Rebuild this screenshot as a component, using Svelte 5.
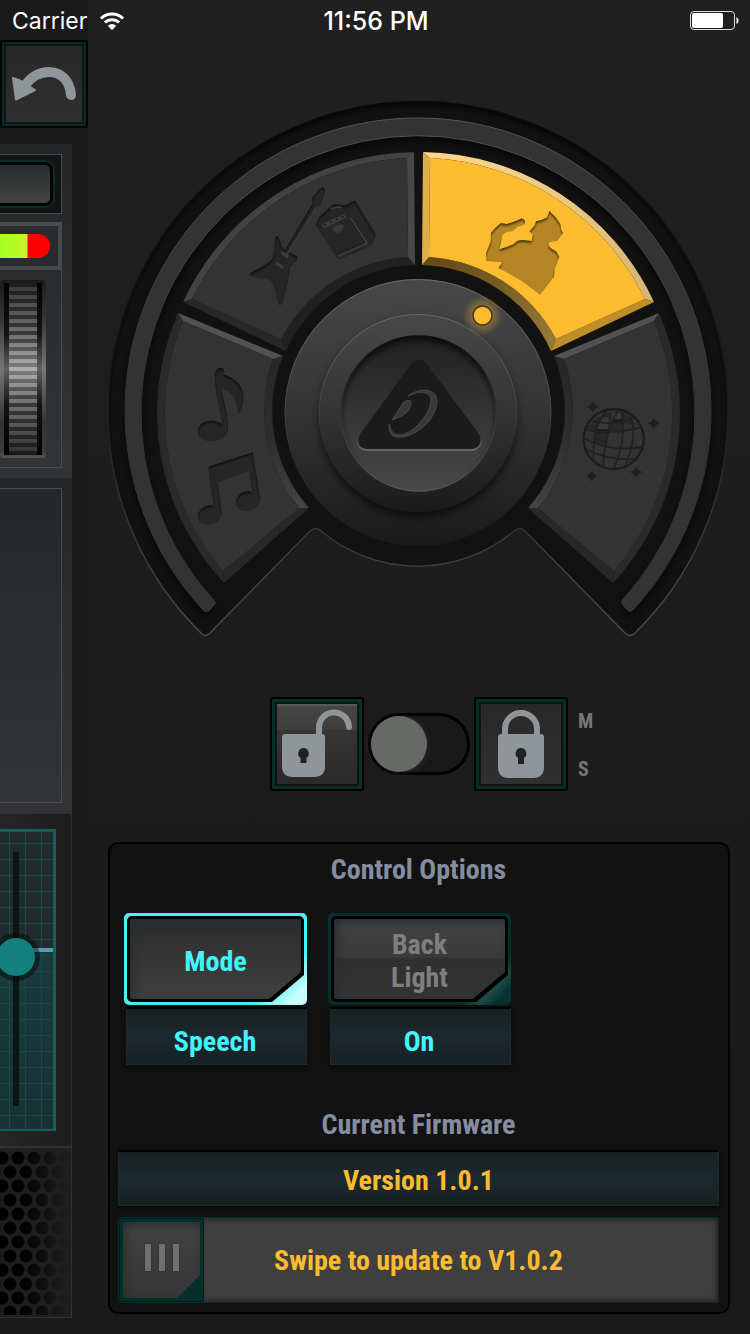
<script>
  const cx = 418.5;
  const mirror = ([x, y]) => [2 * cx - x, y];

  // Corner order: outer start, outer end, inner end, inner start (clockwise).
  const music = {
    ro: 249,
    rof: 243,
    out: [[224, 583], [178, 313], [283, 356], [309, 508]],
    face: [[223, 571], [183, 321], [273, 359], [299, 508]]
  };
  const guitar = {
    ro: 259,
    rof: 252,
    out: [[183, 302], [414, 152], [415, 265], [286, 351]],
    face: [[192, 299], [407, 158], [408, 257], [281, 339]]
  };
  const flip = ({ ro, rof, out, face }) => {
    const f = (p) => [mirror(p[1]), mirror(p[0]), mirror(p[3]), mirror(p[2])];
    return { ro, rof, out: f(out), face: f(face) };
  };

  const ri = 146, rif = 154;
  const p = ([x, y]) => `${x},${y}`;
  function build(name, s, colors) {
    const [A, B, C, D] = s.out;
    const [a, b, c, d] = s.face;
    const { ro, rof } = s;
    return {
      name,
      colors,
      face: `M${p(a)}A${rof},${rof} 0 0 1 ${p(b)}L${p(c)}A${rif},${rif} 0 0 0 ${p(d)}Z`,
      outer: `M${p(A)}A${ro},${ro} 0 0 1 ${p(B)}L${p(b)}A${rof},${rof} 0 0 0 ${p(a)}Z`,
      end: `M${p(B)}L${p(C)}L${p(c)}L${p(b)}Z`,
      inner: `M${p(C)}A${ri},${ri} 0 0 0 ${p(D)}L${p(d)}A${rif},${rif} 0 0 1 ${p(c)}Z`,
      start: `M${p(D)}L${p(A)}L${p(a)}L${p(d)}Z`
    };
  }

  const segments = [
    build('Music', music, { face: '#333', outer: '#2a2a2a', end: '#525252', inner: 'url(#innerSide)', start: '#282828' }),
    build('Guitar', guitar, { face: '#333', outer: '#434343', end: '#484848', inner: '#212121', start: '#272727' }),
    build('Speech', flip(guitar), { face: '#fdbb30', outer: 'url(#goldOuter)', end: '#c08e29', inner: 'url(#goldInner)', start: '#dfae48' }),
    build('Party', flip(music), { face: '#333', outer: '#2a2a2a', end: '#282828', inner: 'url(#innerSide)', start: '#525252' })
  ];

  const stars = [[549, 170], [732, 219], [546, 378], [679, 366]];
  const holes = [];
  for (let r = 0; r < 12; r++)
    for (let c = 0; c < 5; c++) holes.push([(r % 2 ? -6 : 2) + c * 16, 7 + r * 14]);

  const base = 'M201,633A310,310 0 1 1 635,633Q630,638 625,633L525,531Q520,526 514,531A150,150 0 0 1 321,531Q316,526 310,531L210,633Q205,638 201,633Z';

  let locked = $state(false);
  let level = $state(60);
</script>

<div class="app">
  <header class="status">
    <span class="carrier">Carrier
      <svg width="26" height="20" viewBox="0 0 26 20" aria-hidden="true">
        <path d="M2 7.500A15.500 15.500 0 0 1 24 7.500M6 11.500A10 10 0 0 1 20 11.500" fill="none" stroke="#fff" stroke-width="3" />
        <path d="M13 19L8.800 14.800A6 6 0 0 1 17.200 14.800Z" fill="#fff" />
      </svg>
    </span>
    <span class="clock">11:56 PM</span>
    <svg class="battery" width="50" height="20" viewBox="0 0 50 20" aria-hidden="true">
      <rect x=".5" y=".5" width="44" height="18" rx="3.500" fill="none" stroke="#ddd" />
      <rect x="2" y="2" width="31" height="15" rx="2" fill="#fff" />
      <path d="M46.500 6a4 4 0 0 1 0 7z" fill="#fff" />
    </svg>
  </header>

  <aside>
    <button class="undo" aria-label="Undo">
      <svg viewBox="0 0 76 76" aria-hidden="true">
        <path d="M19 40C30 21 62 19 65 49" fill="none" stroke="#8f9699" stroke-width="10" stroke-linecap="round" />
        <path d="M7 32L15 35L29 44L10 53.500Z" fill="#8f9699" stroke="#8f9699" stroke-width="2" stroke-linejoin="round" />
      </svg>
    </button>

    <section class="channel">
      <div class="display"><div class="lcd"></div></div>
      <div class="meter"><div class="bar"></div></div>
      <div class="wheel-box">
        <div class="wheel"><div class="rim"></div><div class="ridges"></div><div class="rim"></div></div>
      </div>
    </section>
    <section class="blank"><div></div></section>
    <section class="fader">
      <div class="grid">
        <input type="range" aria-label="Level" min="0" max="100" bind:value={level} />
      </div>
    </section>
    <section class="grille">
      <svg width="71" height="164" viewBox="0 0 71 164" aria-hidden="true">
        <defs>
          <linearGradient id="fade" gradientUnits="userSpaceOnUse" x1="20" y1="0" x2="68" y2="0">
            <stop offset="0" stop-color="#000" />
            <stop offset="1" stop-color="#000" stop-opacity="0" />
          </linearGradient>
        </defs>
        {#each holes as [x, y]}
          <circle cx={x} cy={y} r="6.500" fill="url(#fade)" />
        {/each}
      </svg>
    </section>
  </aside>

  <main>
    <svg class="dial" viewBox="88 40 662 620">
      <defs>
        <linearGradient id="innerSide" x1="0" y1="0" x2="0" y2="1">
          <stop offset="0" stop-color="#262626" />
          <stop offset=".55" stop-color="#2e2e2e" />
          <stop offset="1" stop-color="#444" />
        </linearGradient>
        <linearGradient id="goldOuter" x1="0" y1="0" x2="1" y2="1">
          <stop offset="0" stop-color="#ffd78a" />
          <stop offset="1" stop-color="#d6b473" />
        </linearGradient>
        <linearGradient id="goldInner" x1="0" y1="0" x2="1" y2="1">
          <stop offset="0" stop-color="#5f4812" />
          <stop offset="1" stop-color="#9c7c3b" />
        </linearGradient>
        <linearGradient id="rimLine" x1="0" y1="0" x2="0" y2="1">
          <stop offset="0" stop-color="#0a0a0a" />
          <stop offset=".5" stop-color="#171717" />
          <stop offset="1" stop-color="#4a4a4a" />
        </linearGradient>
        <linearGradient id="ringLine" x1="0" y1="0" x2="0" y2="1">
          <stop offset="0" stop-color="#565656" />
          <stop offset=".6" stop-color="#333" />
        </linearGradient>
        <linearGradient id="knob" x1="0" y1="0" x2="0" y2="1">
          <stop offset="0" stop-color="#484848" />
          <stop offset=".45" stop-color="#363636" />
          <stop offset="1" stop-color="#1a1a1a" />
        </linearGradient>
        <linearGradient id="knobLine" x1="0" y1="0" x2="0" y2="1">
          <stop offset="0" stop-color="#6a6a6a" />
          <stop offset=".7" stop-color="#6a6a6a" stop-opacity="0" />
        </linearGradient>
        <linearGradient id="dish" x1="0" y1="0" x2="0" y2="1">
          <stop offset="0" stop-color="#202020" />
          <stop offset="1" stop-color="#494949" />
        </linearGradient>
        <linearGradient id="dishLine" x1="0" y1="0" x2="0" y2="1">
          <stop offset="0" stop-color="#0c0c0c" />
          <stop offset="1" stop-color="#555" />
        </linearGradient>
        <linearGradient id="triLine" x1="0" y1="0" x2="0" y2="1">
          <stop offset=".85" stop-color="#777" stop-opacity="0" />
          <stop offset="1" stop-color="#666" />
        </linearGradient>
        <radialGradient id="glow">
          <stop offset=".4" stop-color="#fdbb30" stop-opacity=".4" />
          <stop offset="1" stop-color="#fdbb30" stop-opacity="0" />
        </radialGradient>
        <filter id="drop" color-interpolation-filters="sRGB" x="-20%" y="-20%" width="140%" height="150%">
          <feDropShadow dx="0" dy="5" stdDeviation="4" flood-color="#000" flood-opacity=".6" />
        </filter>
        <filter id="carve" color-interpolation-filters="sRGB" x="-10%" y="-10%" width="120%" height="120%">
          <feOffset in="SourceAlpha" dy="6" result="o" />
          <feGaussianBlur in="o" stdDeviation="2.500" result="b" />
          <feComposite in="SourceAlpha" in2="b" operator="out" result="edge" />
          <feComponentTransfer in="edge" result="soft"><feFuncA type="linear" slope=".6" /></feComponentTransfer>
          <feMerge><feMergeNode in="SourceGraphic" /><feMergeNode in="soft" /></feMerge>
        </filter>
        <filter id="inset" color-interpolation-filters="sRGB" x="-5%" y="-5%" width="110%" height="110%">
          <feGaussianBlur in="SourceAlpha" stdDeviation="3" result="b0" />
          <feOffset in="b0" dy="4" result="b" />
          <feComposite in="SourceAlpha" in2="b" operator="out" result="edge" />
          <feComponentTransfer in="edge" result="soft"><feFuncA type="linear" slope=".7" /></feComponentTransfer>
          <feMerge><feMergeNode in="SourceGraphic" /><feMergeNode in="soft" /></feMerge>
        </filter>
      </defs>

      <path d={base} fill="#121212" filter="url(#inset)" />
      <path d={base} fill="none" stroke="url(#rimLine)" stroke-width="1.500" />
      <path d="M203,610A293,293 0 1 1 633,610Q630,613 627,610L623,605Q620,602 623,599A277,277 0 1 0 213,599Q217,602 214,605L209,611Q206,613 203,610Z" fill="#333" stroke="url(#ringLine)" filter="url(#drop)" />

      {#each segments as s}
        <g role="button" tabindex="0" aria-label={s.name}>
          <path d={s.outer} fill={s.colors.outer} />
          <path d={s.inner} fill={s.colors.inner} />
          <path d={s.end} fill={s.colors.end} />
          <path d={s.start} fill={s.colors.start} />
          <path d={s.face} fill={s.colors.face} />
        </g>
      {/each}

      <g transform="translate(100 90) scale(.3333)" fill="#262626">
        <g filter="url(#carve)">
          <path d="M670,293L675,300L672,318L661,345L648,352L568,486L592,500L590,512L570,532L566,560L560,592L547,640Q542,650 536,643L525,598Q518,570 502,567L455,560Q446,555 452,548Q490,532 515,510Q525,490 524,470L526,445Q531,432 537,444L545,470L555,480L637,342L636,325L656,300Q664,290 670,293Z" />
          <path d="M648,405L658,380L684,358Q695,342 715,343L735,347L765,331L828,435L813,468L722,507Q712,508 706,497Z" />
        </g>
        <path d="M648,354L562,492" stroke="#3a3a3a" stroke-width="5" fill="none" />
        <path d="M545,488l20,13M528,520l22,12" stroke="#3d3d3d" stroke-width="9" fill="none" />
        <path d="M667,401L731,373Q738,374 737,384L676,413Q664,414 667,401Z" fill="#3c3c3c" />
        <g fill="#1b1b1b"><circle cx="675" cy="404" r="3" /><circle cx="692" cy="396" r="3" /><circle cx="710" cy="388" r="3" /><circle cx="728" cy="380" r="3" /></g>
        <path d="M698,415Q715,398 732,405Q730,425 713,429Q701,428 698,415Z" fill="#3a3a3a" />
        <path d="M692,356Q710,350 724,352" stroke="#3b3b3b" stroke-width="5" fill="none" />
        <path d="M752,385L801,460L714,499" stroke="#3b3b3b" stroke-width="6" fill="none" />
        <path d="M752,391L793,457L712,491" stroke="#1b1b1b" stroke-width="3" fill="none" />
      </g>

      <g transform="translate(410 90) scale(.3333)">
        <path filter="url(#carve)" fill="#b38524" d="M325,390Q338,380 344,392Q348,402 338,406L322,411L308,423L290,426Q275,432 275,445L273,460L268,478L290,471L312,462Q320,450 338,450L365,453L368,434L359,424L375,405L378,394Q395,392 412,382L418,363L437,382L451,402L454,420L459,430L442,452L418,457Q412,466 422,474L440,486L448,502L434,537L432,560L390,614L352,585Q325,565 266,535L275,517L230,513L228,490L242,455L243,428L258,412L273,399L290,402L310,396Z" />
      </g>

      <g transform="translate(100 350) scale(.3333)" fill="#262626" filter="url(#carve)">
        <path d="M345,90C340,60 355,50 368,55C374,62 372,68 368,72C410,85 435,115 430,150C428,170 420,185 416,193C412,150 395,120 365,118C368,150 384,190 384,235C384,262 355,275 330,274C305,273 293,258 294,242C296,222 318,210 340,212C355,214 365,220 367,224C362,180 346,130 345,90Z" />
        <path d="M325,350L458,307L480,445C480,470 458,483 438,483C418,483 407,470 408,455C410,435 430,422 448,424L457,428L449,362L353,397L365,488C365,510 345,525 323,525C303,525 293,512 294,497C296,478 315,466 335,466L341,468Z" />
      </g>

      <g transform="translate(410 350) scale(.3333)" fill="none" stroke="#212121" stroke-width="5">
        <path d="M525,240L560,205L590,190L640,185L680,225L640,220L635,250L595,240L590,285L550,275L552,245Z" fill="#272727" stroke="none" />
        <path d="M566,210l30,-10 -3,38 -35,2zM606,187l28,3 -2,20 -26,-4z" fill="#393939" stroke="none" />
        <path d="M560,238h32v12h-32zM608,208h28v10h-28z" fill="#1b1b1b" stroke="none" />
        <circle cx="611" cy="267" r="90" stroke-width="7" stroke="#1c1c1c" />
        <path d="M525,240Q600,255 695,232M521,265Q610,310 701,290M535,300Q600,335 687,325M548,213Q610,230 670,203" />
        <path d="M590,182Q545,235 551,332M625,179Q580,260 580,350M635,185Q650,270 611,356M660,195Q685,260 645,348" />
        {#each stars as [x, y]}
          <path d="M{x},{y - 19}Q{x + 3},{y - 3} {x + 20},{y}Q{x + 3},{y + 4} {x},{y + 19}Q{x - 4},{y + 4} {x - 20},{y}Q{x - 3},{y - 3} {x},{y - 19}Z" fill="#1e1e1e" stroke="none" />
        {/each}
      </g>

      <circle cx="418" cy="412.500" r="133.500" fill="url(#knob)" />
      <circle cx="418" cy="412.500" r="133" fill="none" stroke="url(#knobLine)" />
      <circle cx="418" cy="413.500" r="99" fill="url(#knob)" filter="url(#drop)" />
      <circle cx="418" cy="413.500" r="99" fill="none" stroke="url(#knobLine)" />
      <circle cx="418.500" cy="413.500" r="77.500" fill="url(#dish)" filter="url(#inset)" />
      <circle cx="418.500" cy="413.500" r="77.500" fill="none" stroke="url(#dishLine)" stroke-width="1.500" />
      <path d="M411,364Q419,355 427,364L479,434Q485,446 473,450H366Q353,447 360,434Z" fill="#1b1b1b" stroke="url(#triLine)" stroke-width="2" />
      <path d="M408,396C420,387 437,388 437,402C436,421 413,439 396,437C390,435 389,431 389,424C391,432 394,435 400,435C414,434 431,413 431,400C430,390 418,391 408,396Z" fill="#393939" stroke="#4a4a4a" stroke-width="1" />
      <path d="M392,420L403,403Q406,399 411,401Q413,413 392,420Z" fill="#393939" stroke="#4a4a4a" stroke-width="1" />
      <circle cx="482.500" cy="315.500" r="20" fill="url(#glow)" />
      <circle cx="482.500" cy="315.500" r="9.500" fill="#fdbb30" stroke="#3f3523" stroke-width="1.500" />
    </svg>

    <div class="lock-row">
      <span></span>
      <div class="lock-controls">
        <button class="key raised" aria-label="Unlock">
          <svg viewBox="0 0 82 82" aria-hidden="true">
            <path d="M43 40V25a15 15 0 0 1 30-1" fill="none" stroke="#8f9699" stroke-width="6" stroke-linecap="round" />
            <path d="M9 31h37a3 3 0 0 1 3 3v29q0 11-11 11H17Q6 74 6 63V34a3 3 0 0 1 3-3z" fill="#8f9699" />
            <path d="M27.500 45a5.500 5.500 0 0 1 3 10v5h-6v-5a5.500 5.500 0 0 1 3-10z" fill="#222" />
          </svg>
        </button>
        <input class="toggle" type="checkbox" aria-label="Lock" bind:checked={locked} />
        <button class="key" aria-label="Lock">
          <svg viewBox="0 0 82 82" aria-hidden="true">
            <path d="M25 34V26a16 16 0 0 1 32 0v8" fill="none" stroke="#8f9699" stroke-width="6" />
            <path d="M21 31h40a3 3 0 0 1 3 3v30q0 11-11 11H29q-11 0-11-11V34a3 3 0 0 1 3-3z" fill="#8f9699" />
            <path d="M41 45a5.500 5.500 0 0 1 3 10v6h-6v-6a5.500 5.500 0 0 1 3-10z" fill="#222" />
          </svg>
        </button>
      </div>
      <div class="ms"><span>M</span><span>S</span></div>
    </div>

    <section class="panel">
      <h2>Control Options</h2>
      <div class="options">
        <div class="option">
          <button class="tile active"><span class="edge"><span class="cap">Mode</span></span></button>
          <div class="value">Speech</div>
        </div>
        <div class="option">
          <button class="tile"><span class="edge"><span class="cap">Back<br />Light</span></span></button>
          <div class="value">On</div>
        </div>
      </div>
      <h2>Current Firmware</h2>
      <div class="version">Version 1.0.1</div>
      <div class="swipe">
        <button class="grip" aria-label="Update"><span><i></i><i></i><i></i></span></button>
        <span class="swipe-text">Swipe to update to V1.0.2</span>
      </div>
    </section>
  </main>
</div>

<style>
  :global(body) { margin: 0; background: #1a1a1a; }
  .app {
    display: grid;
    grid-template-columns: 88px 1fr;
    grid-template-rows: 40px auto;
    min-height: 100vh;
    box-sizing: border-box;
    padding-bottom: 16px;
    background:
      linear-gradient(rgba(0, 0, 0, .2), rgba(0, 0, 0, .1) 400px, transparent) 0 0 / 88px 100% no-repeat,
      linear-gradient(#202020, #1c1c1c 50%, #1a1a1a);
    font-family: "Liberation Sans Narrow", "Arial Narrow", "Roboto Condensed", "Liberation Sans", sans-serif;
    font-weight: 700;
    font-size: 28px;
    line-height: 32px;
    overflow: hidden;
  }
  button { font: inherit; padding: 0; margin: 0; border: 0; cursor: pointer; box-sizing: border-box; }
  button svg { display: block; width: 100%; height: 100%; }

  .status {
    grid-column: 1 / -1;
    display: grid;
    grid-template-columns: 1fr auto 1fr;
    align-items: center;
    padding: 1px 10px 0 12px;
    color: #fff;
    font-family: Inter, sans-serif;
    font-size: 23px;
    font-weight: 400;
  }
  .carrier { display: flex; align-items: center; gap: 12px; }
  .clock { font-size: 25px; font-weight: 500; }
  .battery { justify-self: end; }

  .undo {
    display: block;
    width: 88px;
    height: 88px;
    border: 2px solid #000;
    border-radius: 3px;
    padding: 4px;
    background: linear-gradient(#282828, #303030) content-box, #121212;
    box-shadow: inset 0 0 0 2px #04302c;
  }

  aside { min-width: 0; }
  aside section { width: 72px; box-sizing: border-box; overflow: hidden; }
  .channel {
    height: 334px;
    margin-top: 16px;
    padding: 10px 10px 10px 0;
    background: linear-gradient(#24272a, #323435);
  }
  .display {
    height: 60px;
    box-sizing: border-box;
    padding: 7px 8px 7px 0;
    border: solid #4a4c4d;
    border-width: 1px 1px 1px 0;
    background: #131414;
  }
  .lcd {
    height: 100%;
    box-sizing: border-box;
    border: 3px solid #000;
    border-left: 0;
    border-radius: 0 8px 8px 0;
    background: linear-gradient(#262d30, #3a3b3b 60%, #434545);
    box-shadow: 0 0 0 2px #04302c;
  }
  .meter {
    height: 48px;
    margin-top: 8px;
    box-sizing: border-box;
    border: solid #484a4b;
    border-width: 4px 4px 4px 0;
    padding: 8px 8px 8px 0;
    background: #292b2d;
  }
  .bar {
    height: 24px;
    border-radius: 0 12px 12px 0;
    background: linear-gradient(90deg, #a2ff22, #c8f52c 27px, #f00 28px);
  }
  .wheel-box {
    height: 198px;
    box-sizing: border-box;
    border: solid #4a4c4d;
    border-width: 0 1px 1px 0;
    padding-top: 10px;
  }
  .wheel {
    display: flex;
    width: 46px;
    height: 178px;
    box-sizing: border-box;
    padding: 3px 4px;
    border-radius: 4px;
    background: linear-gradient(#1b1b1b, #333 20%, #777 50%, #333 80%, #3c3c3c 96%, #555);
  }
  .rim { width: 5px; background: linear-gradient(#000, #151515 30%, #606060 50%, #151515 70%, #000); }
  .ridges {
    flex: 1;
    background:
      linear-gradient(rgba(0, 0, 0, .6), rgba(0, 0, 0, .2) 30%, rgba(255, 255, 255, .3) 50%, rgba(0, 0, 0, .2) 70%, rgba(0, 0, 0, .65)),
      repeating-linear-gradient(#484848 0 4px, #8c8c8c 4px 8px);
  }
  .blank { height: 335px; padding: 10px 10px 10px 0; background: linear-gradient(#24272a, #333435); }
  .blank div { height: 100%; box-sizing: border-box; border: solid #4a4c4d; border-width: 1px 1px 1px 0; }
  .fader {
    height: 334px;
    padding: 15px 15px 16px 0;
    border: solid #30303b;
    border-width: 1px 1px 1px 0;
    background: linear-gradient(90deg, #262626, #1c1c1c);
  }
  .grid {
    height: 302px;
    box-sizing: border-box;
    padding: 23px 0;
    background:
      linear-gradient(90deg, transparent 20px, #5a9bb2 20px) 0 119px / 100% 4px no-repeat,
      repeating-linear-gradient(transparent 0 14px, #17484a 14px 15px, transparent 15px 16px),
      repeating-linear-gradient(90deg, transparent 0 9px, #17484a 9px 10px, transparent 10px 16px),
      linear-gradient(#232a2c 0 120px, #1a3a3c 120px, #173133);
    box-shadow: inset -2px 0 #1a5f5d, inset 0 3px 1px #1a5f5d, inset -3px -2px 1px #1a5f5d;
  }
  input[type="range"] {
    display: block;
    appearance: none;
    writing-mode: vertical-lr;
    direction: rtl;
    width: 38px;
    height: 254px;
    margin: 0 0 0 -3px;
    background: linear-gradient(#0c1516, #0c1516) center / 6px 100% no-repeat;
  }
  input[type="range"]::-webkit-slider-thumb {
    appearance: none;
    width: 38px;
    height: 38px;
    border-radius: 50%;
    background: #14807e;
    box-shadow: 0 0 0 5px rgba(0, 0, 0, .4);
  }
  .grille { height: 171px; border: solid #30303b; border-width: 1px 1px 1px 0; padding-top: 3px; background: #1f1f1f; }
  .grille svg { display: block; }

  main { min-width: 0; }
  .dial { display: block; width: 100%; }
  .dial g { outline: none; }

  .lock-row {
    display: grid;
    grid-template-columns: 1fr auto 1fr;
    gap: 10px;
    margin-top: 37px;
  }
  .lock-controls { display: flex; align-items: center; gap: 4px; }
  .key {
    width: 94px;
    height: 94px;
    padding: 4px;
    border: 2px solid #000;
    border-radius: 3px;
    background: linear-gradient(#282828, #303030);
    box-shadow: inset 0 0 0 3px #04302c, inset 0 0 0 5px #121212;
  }
  .key.raised {
    background: linear-gradient(#484848, #3e3e3e 34%, #353535 34%, #282828);
    box-shadow: inset 0 0 0 3px #04302c, inset 0 0 0 5px #121212, inset 0 7px #585858;
  }
  .toggle {
    appearance: none;
    display: flex;
    width: 102px;
    height: 62px;
    box-sizing: border-box;
    margin: 0;
    border: 3px solid #000;
    border-radius: 31px;
    background: #191919;
  }
  .toggle::before {
    content: "";
    width: 56px;
    height: 56px;
    border-radius: 50%;
    background: #676967;
    box-shadow: 0 1px 7px rgba(110, 112, 110, .25);
  }
  .toggle:checked { justify-content: flex-end; }
  .ms { display: flex; flex-direction: column; gap: 24px; padding-top: 12px; font-size: 20px; line-height: 24px; color: #757777; }

  .panel {
    margin: 51px 20px 0;
    padding: 10px 9px 9px 8px;
    border: 2px solid #000;
    border-radius: 10px;
    background: #121212;
    text-align: center;
  }
  h2 { margin: 0; font-size: 28px; line-height: 32px; color: #868da0; }
  .options { display: grid; grid-template-columns: 183px 183px; gap: 21px; margin: 27px 6px 44px; }
  .tile {
    display: block;
    width: 100%;
    height: 92px;
    padding: 3px;
    border-radius: 5px;
    background: linear-gradient(135deg, #06302d 82%, #1d4a44 88%, #053430 94%);
    color: #7f7f7f;
    line-height: 33px;
  }
  .tile.active { background: linear-gradient(135deg, #45f2fa 80%, #8cf8fb 86%, #c9fcfd 93%); color: #41f4fd; }
  .edge, .cap {
    display: flex;
    height: 100%;
    box-sizing: border-box;
    clip-path: polygon(0 0, 100% 0, 100% calc(100% - 27px), calc(100% - 32px) 100%, 0 100%);
  }
  .edge { padding: 3px; border-radius: 5px; background: #000; }
  .cap {
    flex: 1;
    align-items: center;
    justify-content: center;
    padding-top: 4px;
    border-radius: 3px;
    background: linear-gradient(#434343, #3a3a3a 48%, #303030 50%, #333);
    box-shadow: inset 4px 4px 10px #263033;
  }
  .active .cap { background: linear-gradient(#2c2c2c, #404040); }
  .value, .version {
    box-sizing: border-box;
    border: 1px solid #1a2a2d;
    border-top: 2px solid #000;
    background: linear-gradient(#192022, #1c292e 50%, #172022);
    box-shadow: 0 3px 6px #0a0a0a;
  }
  .value { height: 58px; margin: 2px 0 0 2px; padding-right: 3px; line-height: 65px; color: #41f4fd; }
  .version { height: 56px; margin-top: 9px; line-height: 58px; color: #fdbb30; }
  .swipe {
    display: grid;
    align-items: center;
    height: 86px;
    box-sizing: border-box;
    margin-top: 11px;
    border: 1px solid #04302c;
    border-radius: 3px;
    background: #3f3f3f;
    box-shadow: inset 0 0 7px #151515;
    color: #fdbb30;
  }
  .swipe > * { grid-area: 1 / 1; }
  .swipe-text { padding-top: 2px; }
  .grip {
    width: 85px;
    height: 84px;
    padding: 3px;
    border: 1px solid #071a18;
    background: #04302c;
    z-index: 1;
  }
  .grip span {
    display: flex;
    align-items: center;
    justify-content: center;
    gap: 8px;
    height: 100%;
    padding-bottom: 6px;
    box-sizing: border-box;
    background: linear-gradient(#434343, #363636);
    box-shadow: inset 3px 3px 8px #26302f;
    clip-path: polygon(0 0, 100% 0, 100% calc(100% - 23px), calc(100% - 23px) 100%, 0 100%);
  }
  .grip i { width: 6px; height: 27px; background: #707070; box-shadow: 0 0 2px #222; }
</style>
